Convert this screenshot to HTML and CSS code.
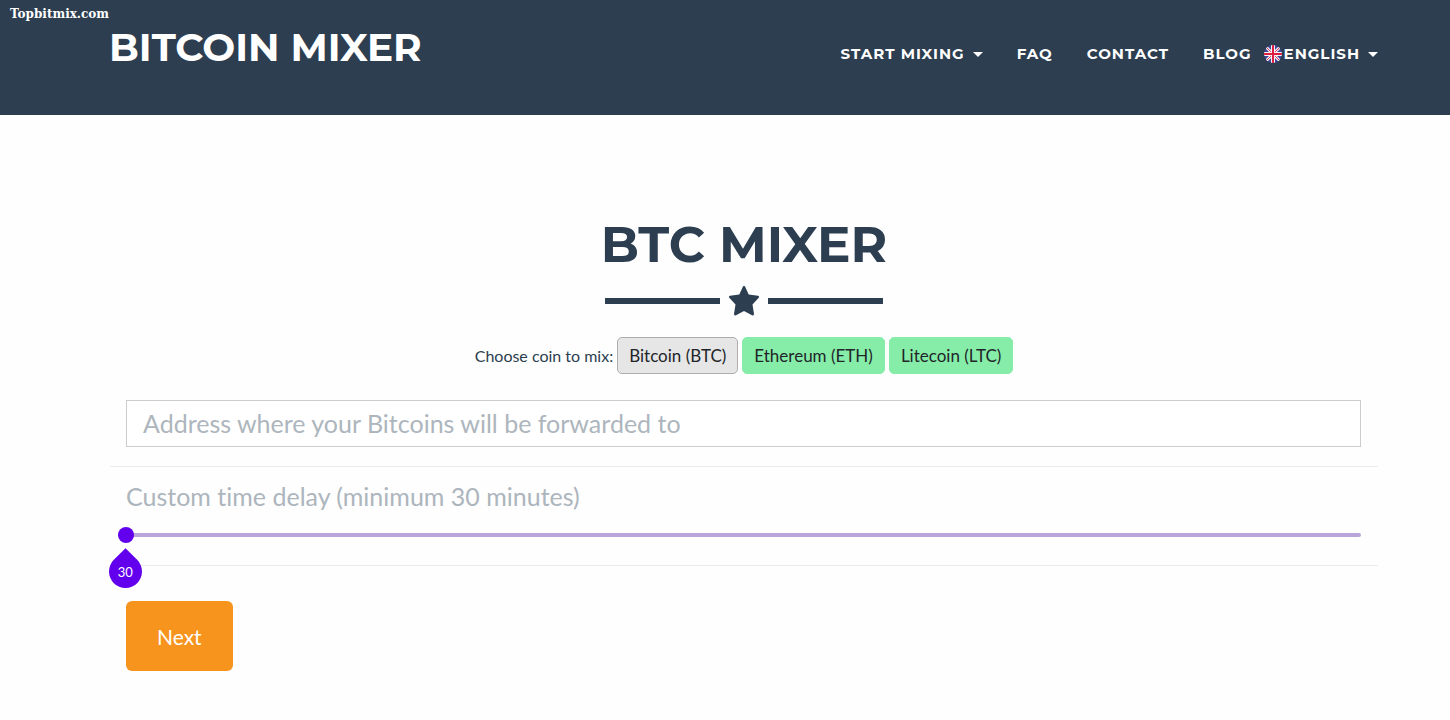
FILE: index.html
```html
<!DOCTYPE html>
<html lang="en">
<head>
  <meta charset="UTF-8">
  <meta name="viewport" content="width=device-width, initial-scale=1.0">
  <title>Bitcoin Mixer</title>
  <link rel="stylesheet" href="styles.css">
</head>
<body>
  <header class="header">
    <span class="site-tag">Topbitmix.com</span>
    <a class="brand" href="#">BITCOIN MIXER</a>
    <nav class="nav">
      <a class="dropdown" href="#">START MIXING</a>
      <a href="#">FAQ</a>
      <a href="#">CONTACT</a>
      <div class="nav-group">
        <a href="#">BLOG</a>
        <a class="dropdown" href="#">
          <svg class="flag" viewBox="0 0 18 18" aria-hidden="true">
            <clipPath id="round"><circle cx="9" cy="9" r="9"/></clipPath>
            <g clip-path="url(#round)">
              <rect width="18" height="18" fill="#41479b"/>
              <path d="M0 0L18 18M18 0L0 18" stroke="#f5f5f5" stroke-width="3"/>
              <path d="M0 0L18 18M18 0L0 18" stroke="#d8365a" stroke-width="1"/>
              <path d="M9 0V18M0 9H18" stroke="#f5f5f5" stroke-width="4"/>
              <path d="M9 0V18M0 9H18" stroke="#dc1f42" stroke-width="2"/>
            </g>
          </svg>ENGLISH</a>
      </div>
    </nav>
  </header>

  <main class="container">
    <h1>BTC MIXER</h1>
    <div class="divider">
      <span class="divider-line"></span>
      <svg class="star" viewBox="0 0 32 32" aria-hidden="true">
        <path d="M15 1.500Q16 0 17 1.500L20.700 9.500L30 10.800Q32 11.500 30.500 13L24.500 19.500L26 29Q26 31 24 30.300L16 26L8 30.300Q6 31 6 29L7.500 19.500L1.500 13Q0 11.500 2 10.800L11.300 9.500Z" fill="#2c3e50"/>
      </svg>
      <span class="divider-line"></span>
    </div>

    <div class="coins">
      <span>Choose coin to mix:</span>
      <button type="button" class="coin active">Bitcoin (BTC)</button>
      <button type="button" class="coin">Ethereum (ETH)</button>
      <button type="button" class="coin">Litecoin (LTC)</button>
    </div>

    <form id="mix-form">
      <div class="form-row">
        <input type="text" class="address" name="address" aria-label="Bitcoin address" placeholder="Address where your Bitcoins will be forwarded to">
      </div>

      <div class="form-row delay-row">
        <label for="delay">Custom time delay (minimum 30 minutes)</label>
        <div class="slider">
          <input type="range" id="delay" name="delay" min="30" max="1440" value="30">
          <output class="bubble" for="delay"><span>30</span></output>
        </div>
      </div>

      <button type="submit" class="next">Next</button>
    </form>
  </main>
</body>
</html>
```
FILE: styles.css
```css
* {
  box-sizing: border-box;
}

body {
  font-family: Lato, sans-serif;
  font-size: 16px;
  font-variant-ligatures: none;
  background: #fefefe;
  color: #2c3e50;
  margin: 0;
}

/* Header */
.header {
  position: relative;
  display: flex;
  justify-content: space-between;
  align-items: center;
  padding: 20px 72px 41px 109px;
  background: #2c3e50;
  font-family: Montserrat, Inter, sans-serif;
  font-weight: 700;
}

.header a {
  color: white;
  text-decoration: none;
}

.site-tag {
  position: absolute;
  top: 7px;
  left: 10px;
  color: white;
  font-family: "DejaVu Serif", serif;
  font-size: 12px;
  line-height: 14px;
}

.brand {
  font-size: 39px;
  line-height: 48px;
}

.nav,
.nav-group {
  display: flex;
  align-items: center;
}

.nav {
  gap: 34px;
  padding-top: 14px;
  font-size: 15px;
  line-height: 40px;
  letter-spacing: 1px;
}

.nav-group {
  gap: 12px;
}

.dropdown {
  display: flex;
  align-items: center;
}

.dropdown::after {
  content: "";
  margin-left: 8px;
  border-top: 5px solid white;
  border-left: 5px solid transparent;
  border-right: 5px solid transparent;
}

.flag {
  width: 18px;
  height: 18px;
  margin-right: 2px;
}

/* Main content */
.container {
  padding: 104px 72px 48px 110px;
}

h1 {
  margin: 0;
  font-family: Montserrat, Inter, sans-serif;
  font-size: 50px;
  font-weight: 700;
  line-height: 52px;
  text-align: center;
}

.divider {
  display: flex;
  justify-content: center;
  align-items: center;
  gap: 8px;
  margin: 14px 0 20px;
}

.divider-line {
  width: 115px;
  height: 6px;
  background: #2c3e50;
}

.star {
  width: 32px;
  height: 32px;
}

.coins {
  display: flex;
  justify-content: center;
  align-items: center;
  gap: 4px;
  margin-bottom: 26px;
}

.coin {
  height: 37px;
  padding: 0 11px;
  border: 1px solid #86eda8;
  border-radius: 5px;
  background: #86eda8;
  color: #212529;
  font-family: inherit;
  font-size: 17px;
  cursor: pointer;
}

.coin.active {
  border-color: #adadad;
  background: #e6e6e6;
}

/* Form */
.form-row {
  padding: 0 17px 19px 16px;
  border-bottom: 1px solid #ececec;
}

.address {
  display: block;
  width: 100%;
  height: 47px;
  padding: 0 16px 2px;
  border: 1px solid #cccccc;
  background: white;
  color: #2c3e50;
  font-family: inherit;
  font-size: 25px;
}

.address::placeholder {
  color: #adb5bd;
  opacity: 1;
}

.delay-row {
  padding-top: 14px;
  padding-bottom: 22px;
}

.delay-row label {
  display: block;
  color: #adb5bd;
  font-size: 25px;
  line-height: 30px;
}

.slider {
  position: relative;
  margin: 16px 0 0 -8px;
}

.slider input {
  display: block;
  width: 100%;
  height: 16px;
  margin: 0;
  background: none;
  appearance: none;
}

.slider input::-webkit-slider-runnable-track {
  height: 4px;
  border-radius: 2px;
  background: #bba6dc;
}

.slider input::-webkit-slider-thumb {
  width: 16px;
  height: 16px;
  margin-top: -6px;
  border-radius: 50%;
  background: #6200ee;
  appearance: none;
}

/* Drop shaped value under the thumb */
.bubble {
  position: absolute;
  top: 28px;
  left: -9px;
  display: flex;
  justify-content: center;
  align-items: center;
  width: 33px;
  height: 33px;
  border-radius: 0 50% 50% 50%;
  background: #6200ee;
  color: white;
  font-size: 13px;
  transform: rotate(45deg);
}

.bubble span {
  transform: rotate(-45deg);
}

.next {
  display: block;
  height: 70px;
  margin: 35px 0 0 16px;
  padding: 0 31px;
  border: 0;
  border-radius: 6px;
  background: #f7941d;
  color: white;
  font-family: inherit;
  font-size: 21px;
  cursor: pointer;
}
```
